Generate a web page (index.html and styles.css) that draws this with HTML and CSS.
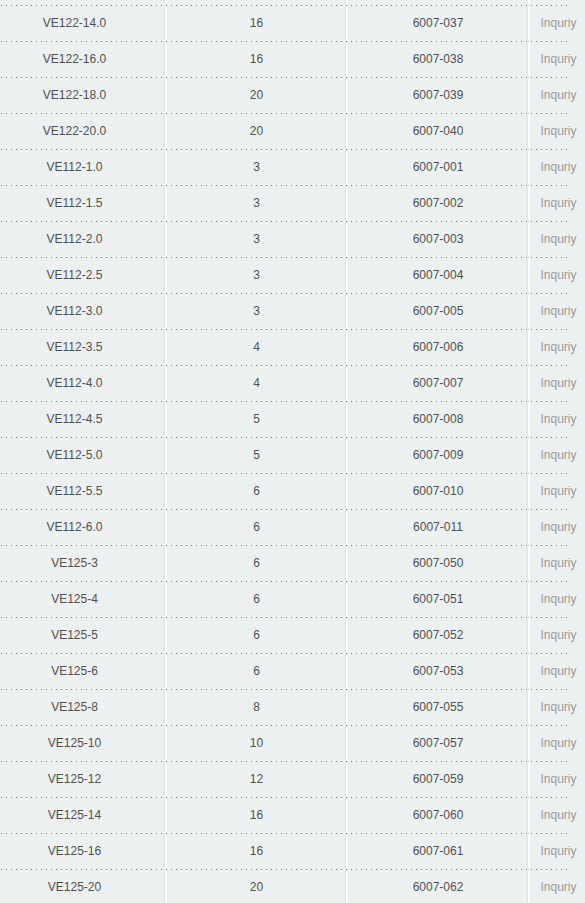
FILE: index.html
```html
<!DOCTYPE html>
<html>
<head>
<meta charset="utf-8">
<link rel="stylesheet" href="styles.css">
</head>
<body>
<div class="table">
  <div class="row spacer"><div class="cell"></div><div class="cell sep"></div><div class="cell sep"></div><div class="cell sep"></div></div>
  <div class="row"><div class="cell name">VE122-14.0</div><div class="cell sep">16</div><div class="cell sep">6007-037</div><div class="cell sep inq">Inquriy</div></div>
  <div class="row"><div class="cell name">VE122-16.0</div><div class="cell sep">16</div><div class="cell sep">6007-038</div><div class="cell sep inq">Inquriy</div></div>
  <div class="row"><div class="cell name">VE122-18.0</div><div class="cell sep">20</div><div class="cell sep">6007-039</div><div class="cell sep inq">Inquriy</div></div>
  <div class="row"><div class="cell name">VE122-20.0</div><div class="cell sep">20</div><div class="cell sep">6007-040</div><div class="cell sep inq">Inquriy</div></div>
  <div class="row"><div class="cell name">VE112-1.0</div><div class="cell sep">3</div><div class="cell sep">6007-001</div><div class="cell sep inq">Inquriy</div></div>
  <div class="row"><div class="cell name">VE112-1.5</div><div class="cell sep">3</div><div class="cell sep">6007-002</div><div class="cell sep inq">Inquriy</div></div>
  <div class="row"><div class="cell name">VE112-2.0</div><div class="cell sep">3</div><div class="cell sep">6007-003</div><div class="cell sep inq">Inquriy</div></div>
  <div class="row"><div class="cell name">VE112-2.5</div><div class="cell sep">3</div><div class="cell sep">6007-004</div><div class="cell sep inq">Inquriy</div></div>
  <div class="row"><div class="cell name">VE112-3.0</div><div class="cell sep">3</div><div class="cell sep">6007-005</div><div class="cell sep inq">Inquriy</div></div>
  <div class="row"><div class="cell name">VE112-3.5</div><div class="cell sep">4</div><div class="cell sep">6007-006</div><div class="cell sep inq">Inquriy</div></div>
  <div class="row"><div class="cell name">VE112-4.0</div><div class="cell sep">4</div><div class="cell sep">6007-007</div><div class="cell sep inq">Inquriy</div></div>
  <div class="row"><div class="cell name">VE112-4.5</div><div class="cell sep">5</div><div class="cell sep">6007-008</div><div class="cell sep inq">Inquriy</div></div>
  <div class="row"><div class="cell name">VE112-5.0</div><div class="cell sep">5</div><div class="cell sep">6007-009</div><div class="cell sep inq">Inquriy</div></div>
  <div class="row"><div class="cell name">VE112-5.5</div><div class="cell sep">6</div><div class="cell sep">6007-010</div><div class="cell sep inq">Inquriy</div></div>
  <div class="row"><div class="cell name">VE112-6.0</div><div class="cell sep">6</div><div class="cell sep">6007-011</div><div class="cell sep inq">Inquriy</div></div>
  <div class="row"><div class="cell name">VE125-3</div><div class="cell sep">6</div><div class="cell sep">6007-050</div><div class="cell sep inq">Inquriy</div></div>
  <div class="row"><div class="cell name">VE125-4</div><div class="cell sep">6</div><div class="cell sep">6007-051</div><div class="cell sep inq">Inquriy</div></div>
  <div class="row"><div class="cell name">VE125-5</div><div class="cell sep">6</div><div class="cell sep">6007-052</div><div class="cell sep inq">Inquriy</div></div>
  <div class="row"><div class="cell name">VE125-6</div><div class="cell sep">6</div><div class="cell sep">6007-053</div><div class="cell sep inq">Inquriy</div></div>
  <div class="row"><div class="cell name">VE125-8</div><div class="cell sep">8</div><div class="cell sep">6007-055</div><div class="cell sep inq">Inquriy</div></div>
  <div class="row"><div class="cell name">VE125-10</div><div class="cell sep">10</div><div class="cell sep">6007-057</div><div class="cell sep inq">Inquriy</div></div>
  <div class="row"><div class="cell name">VE125-12</div><div class="cell sep">12</div><div class="cell sep">6007-059</div><div class="cell sep inq">Inquriy</div></div>
  <div class="row"><div class="cell name">VE125-14</div><div class="cell sep">16</div><div class="cell sep">6007-060</div><div class="cell sep inq">Inquriy</div></div>
  <div class="row"><div class="cell name">VE125-16</div><div class="cell sep">16</div><div class="cell sep">6007-061</div><div class="cell sep inq">Inquriy</div></div>
  <div class="row"><div class="cell name">VE125-20</div><div class="cell sep">20</div><div class="cell sep">6007-062</div><div class="cell sep inq">Inquriy</div></div>
</div>
</body>
</html>
```
FILE: styles.css
```css
html, body {
  margin: 0;
  padding: 0;
  background: #edf0f1;
  overflow: hidden;
}
.table {
  width: 585px;
  font-family: "Liberation Sans", Arial, sans-serif;
  font-size: 12px;
  color: #505050;
}
.row {
  display: grid;
  grid-template-columns: 165px 181px 182px 57px;
  height: 36px;
  box-sizing: border-box;
  padding: 2px 0 1px;
  background: repeating-linear-gradient(to right, #7a7a7a 0 1px, transparent 1px 5px) 1px 0 / 570px 1px no-repeat;
}
.row.spacer {
  height: 5px;
  padding: 0;
  background: none;
}
.row.spacer .cell {
  height: 3px;
  padding: 0;
}
.cell {
  display: flex;
  align-items: center;
  justify-content: center;
  min-width: 0;
  white-space: nowrap;
  padding-bottom: 2px;
}
.cell.name {
  padding-right: 16px;
}
.cell.sep {
  border-left: 2px solid #fff;
  box-shadow: -1px 0 0 #dfe3e4;
}
.cell.inq {
  color: #9a9a9a;
  padding-left: 2px;
}
```
